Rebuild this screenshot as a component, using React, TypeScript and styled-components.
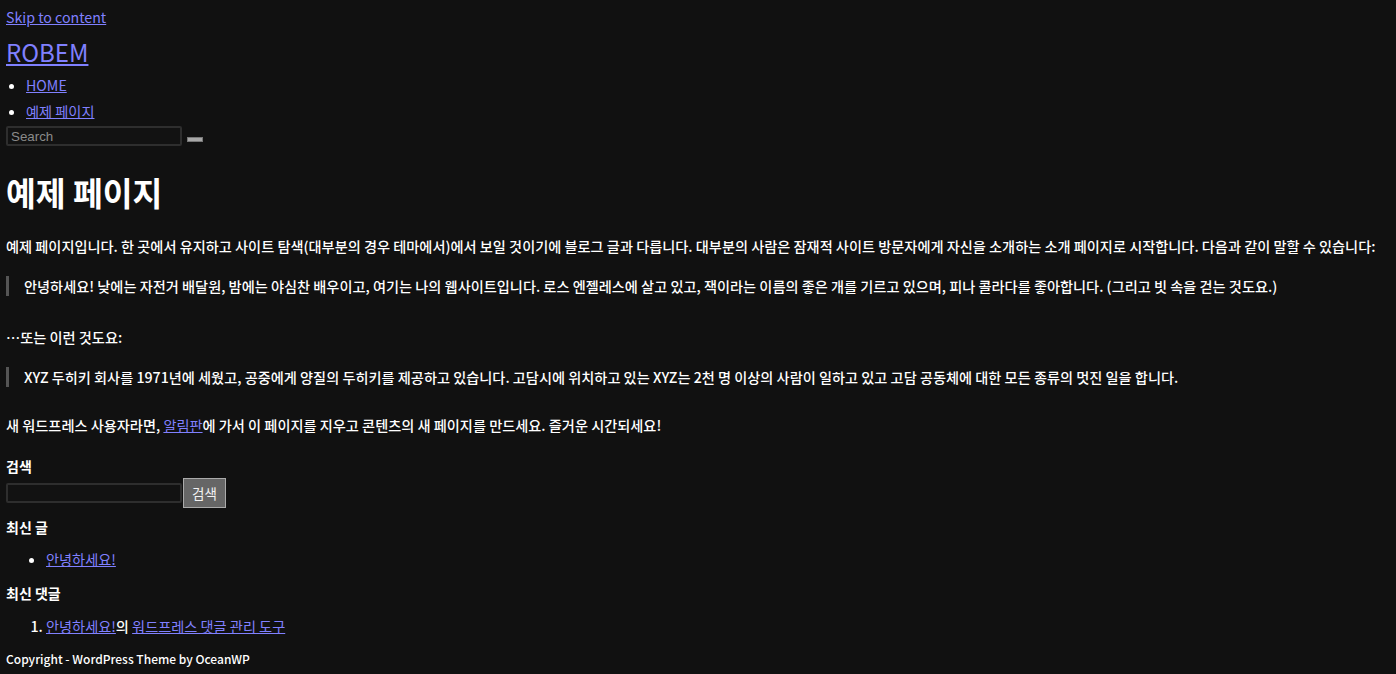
import styled, { createGlobalStyle } from 'styled-components';

const GlobalStyle = createGlobalStyle`
  html, body {
    margin: 0;
    background: #111111;
  }
  body {
    color: #ffffff;
    font-family: 'Noto Sans CJK KR', 'Noto Sans', sans-serif;
    font-size: 14.2px;
    font-weight: 500;
  }
  a {
    color: #8080ff;
    font-weight: 400;
  }
`;

const Page = styled.div`
  padding: 6px;
  min-height: 662px;
  box-sizing: border-box;
`;

const SkipLink = styled.a`
  display: block;
  font-size: 14.2px;
  line-height: 22px;
`;

const SiteTitle = styled.a`
  display: inline-block;
  margin-top: 8px;
  font-size: 24px;
  line-height: 32px;
`;

const NavList = styled.ul`
  margin: 4px 0 0;
  padding-left: 20px;
  font-size: 14.2px;
  line-height: 26px;
`;

const SearchRow = styled.form`
  display: flex;
  align-items: center;
  gap: 5px;
  height: 20px;
  margin-top: 2px;
`;

const TextInput = styled.input`
  width: 176px;
  height: 20px;
  box-sizing: border-box;
  background: #121212;
  border: 2px solid #2e2e2e;
  border-radius: 2px;
  color: #ccc;
  padding: 0 3px;
  font-family: 'Liberation Sans', Arial, sans-serif;
  font-size: 13.33px;

  &::placeholder {
    color: #8a8a8a;
  }
`;

const TinyButton = styled.button`
  width: 16px;
  height: 5px;
  padding: 0;
  margin-top: 7px;
  background: #a8a8a8;
  border: 1px solid #777;
`;

const Title = styled.h1`
  margin: 24px 0 0;
  font-size: 32.4px;
  line-height: 44px;
  font-weight: 700;
`;

const Para = styled.p<{ $top?: number }>`
  margin: ${({ $top }) => $top ?? 22}px 0 0;
  line-height: 20px;
`;

const Quote = styled.blockquote`
  margin: 20px 0 0;
  padding-left: 15px;
  border-left: 3px solid #555;
  line-height: 20px;
`;

const WidgetTitle = styled.h2<{ $top?: number }>`
  margin: ${({ $top }) => $top ?? 12}px 0 0;
  font-size: 14px;
  font-weight: 700;
  line-height: 20px;
`;

const WidgetForm = styled.form`
  display: flex;
  align-items: center;
  margin-top: 2px;
`;

const SubmitButton = styled.button`
  width: 43px;
  height: 30px;
  margin-left: 1px;
  background: #666666;
  border: 1px solid #aaaaaa;
  color: #f2f2f2;
  font-family: 'Noto Sans CJK KR', sans-serif;
  font-size: 13.5px;
  padding: 0;
`;

const WidgetList = styled.ul`
  margin: 12px 0 0;
  padding-left: 40px;
  line-height: 20px;
`;

const WidgetOList = styled.ol`
  margin: 13px 0 0;
  padding-left: 40px;
  line-height: 20px;
`;

const Footer = styled.footer`
  margin-top: 13px;
  font-size: 12px;
  line-height: 20px;
`;

export default function App() {
  return (
    <Page>
      <GlobalStyle />
      <SkipLink href="#content">Skip to content</SkipLink>
      <SiteTitle href="#">ROBEM</SiteTitle>
      <NavList>
        <li><a href="#">HOME</a></li>
        <li><a href="#">예제 페이지</a></li>
      </NavList>
      <SearchRow>
        <TextInput placeholder="Search" />
        <TinyButton type="button" />
      </SearchRow>

      <main id="content">
        <Title>예제 페이지</Title>
        <Para>
          예제 페이지입니다. 한 곳에서 유지하고 사이트 탐색(대부분의 경우 테마에서)에서 보일 것이기에 블로그 글과 다릅니다. 대부분의 사람은 잠재적 사이트 방문자에게 자신을 소개하는 소개 페이지로 시작합니다. 다음과 같이 말할 수 있습니다:
        </Para>
        <Quote>
          안녕하세요! 낮에는 자전거 배달원, 밤에는 야심찬 배우이고, 여기는 나의 웹사이트입니다. 로스 엔젤레스에 살고 있고, 잭이라는 이름의 좋은 개를 기르고 있으며, 피나 콜라다를 좋아합니다. (그리고 빗 속을 걷는 것도요.)
        </Quote>
        <Para $top={31}>…또는 이런 것도요:</Para>
        <Quote>
          XYZ 두히키 회사를 1971년에 세웠고, 공중에게 양질의 두히키를 제공하고 있습니다. 고담시에 위치하고 있는 XYZ는 2천 명 이상의 사람이 일하고 있고 고담 공동체에 대한 모든 종류의 멋진 일을 합니다.
        </Quote>
        <Para $top={28}>
          새 워드프레스 사용자라면, <a href="#">알림판</a>에 가서 이 페이지를 지우고 콘텐츠의 새 페이지를 만드세요. 즐거운 시간되세요!
        </Para>
      </main>

      <aside>
        <WidgetTitle $top={21}>검색</WidgetTitle>
        <WidgetForm>
          <TextInput />
          <SubmitButton type="button">검색</SubmitButton>
        </WidgetForm>
        <WidgetTitle $top={9}>최신 글</WidgetTitle>
        <WidgetList>
          <li><a href="#">안녕하세요!</a></li>
        </WidgetList>
        <WidgetTitle $top={14}>최신 댓글</WidgetTitle>
        <WidgetOList>
          <li><a href="#">안녕하세요!</a>의 <a href="#">워드프레스 댓글 관리 도구</a></li>
        </WidgetOList>
      </aside>

      <Footer>Copyright - WordPress Theme by OceanWP</Footer>
    </Page>
  );
}
